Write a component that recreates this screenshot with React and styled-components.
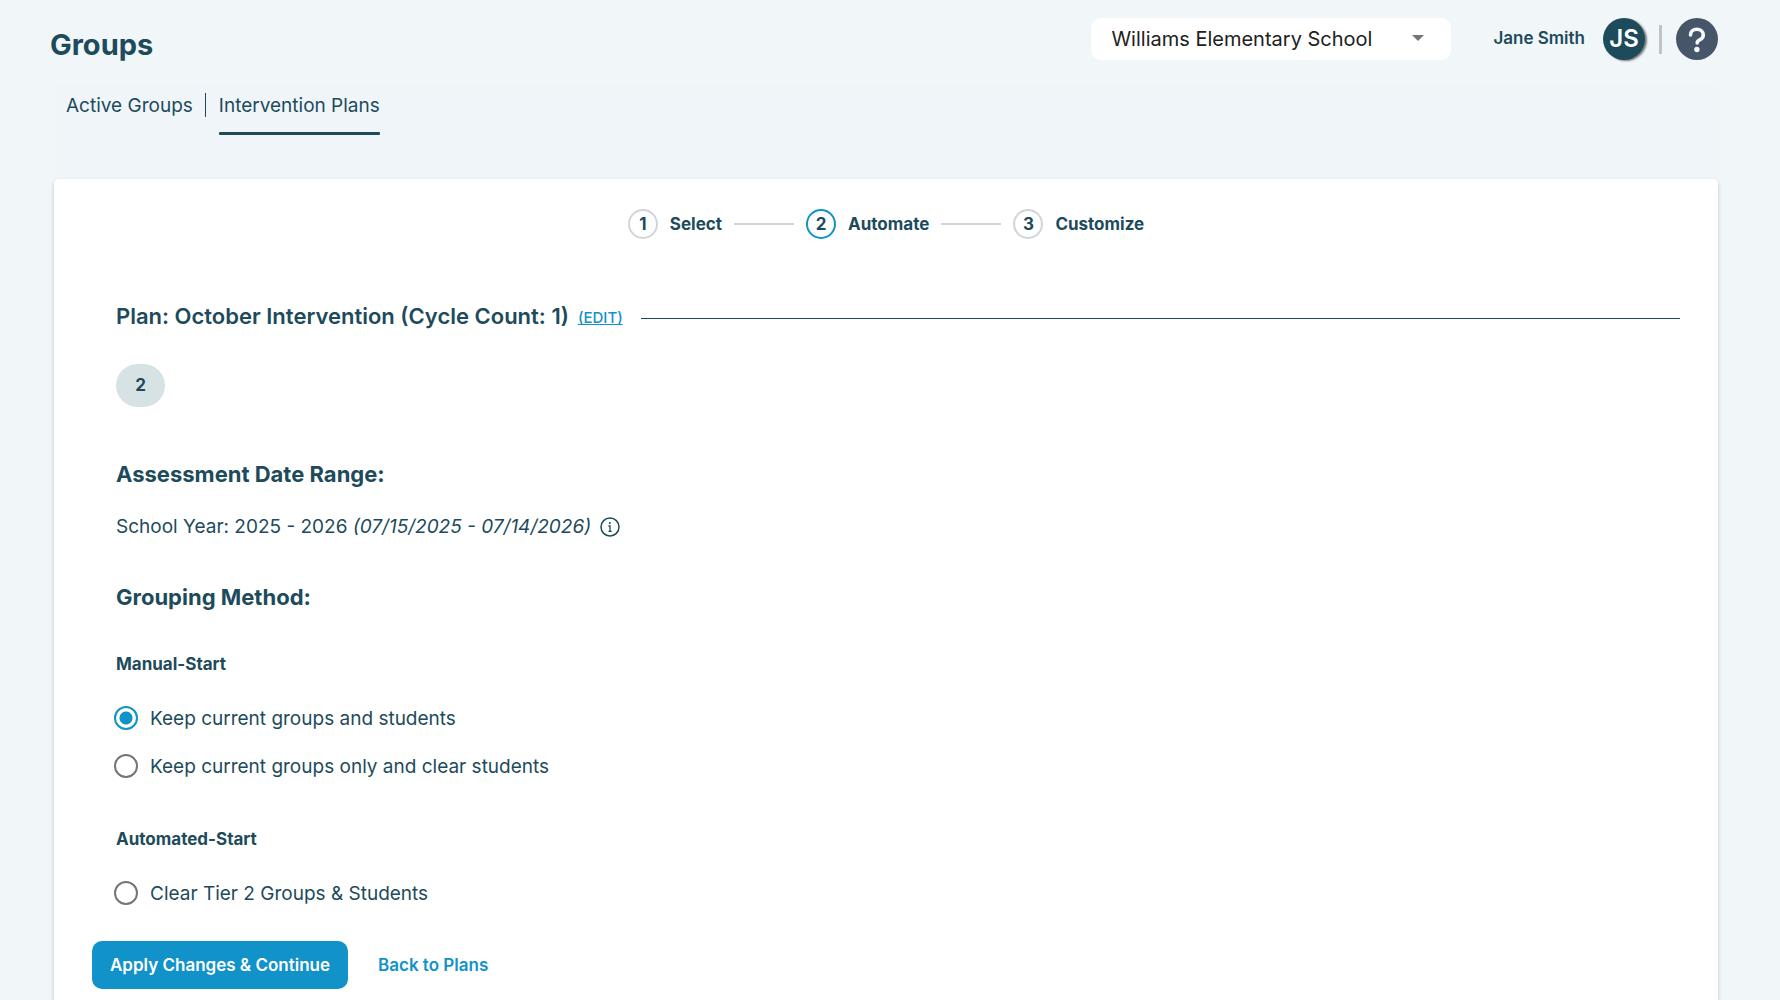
import React, { useState } from "react";
import styled, { createGlobalStyle } from "styled-components";

const ink = "#1d4b5b";
const blue = "#1192c8";

const GlobalStyle = createGlobalStyle`
  *, *::before, *::after { box-sizing: border-box; }
  body {
    margin: 0;
    background: #f1f6f9;
    color: ${ink};
    font-family: Inter, "Liberation Sans", sans-serif;
    font-size: 19px;
    line-height: 24px;
  }
  h1, h2, p, fieldset { margin: 0; padding: 0; border: 0; }
`;

const Page = styled.div`
  padding: 0 62px 0 54px;
  min-height: 100vh;
  display: flex;
  flex-direction: column;
`;

const Header = styled.header`
  height: 85px;
  margin-left: -4px;
  padding-top: 18px;
  display: flex;
  align-items: flex-start;
`;

const Title = styled.h1`
  flex: 1;
  padding-top: 10px;
  font-size: 29px;
  line-height: 34px;
  font-weight: 700;
`;

const SchoolPicker = styled.div`
  position: relative;
  width: 360px;
  margin-right: 42px;
`;

const SchoolSelect = styled.select`
  appearance: none;
  display: block;
  width: 100%;
  height: 42px;
  padding: 0 48px 0 20px;
  border: 0;
  border-radius: 10px;
  background: #fff;
  color: #212121;
  font: inherit;
  font-size: 20px;
`;

const Caret = styled.svg`
  position: absolute;
  right: 27px;
  top: 17px;
  width: 12px;
  height: 6px;
  pointer-events: none;
`;

const UserBar = styled.div`
  height: 42px;
  display: flex;
  align-items: center;
`;

const UserName = styled.span`
  margin-right: 18px;
  padding-bottom: 3px;
  font-size: 17px;
  font-weight: 600;
`;

const Avatar = styled.button`
  width: 42px;
  height: 42px;
  padding: 0;
  border: 0;
  border-radius: 50%;
  background: ${ink};
  color: #fff;
  box-shadow: 2px 1px 2px rgba(0, 0, 0, 0.5);
  font: 600 24px/42px Inter, "Liberation Sans", sans-serif;
`;

const UserDivider = styled.span`
  width: 3px;
  height: 29px;
  margin: 0 14px;
  background: #c1c4c7;
`;

const HelpButton = styled.button`
  width: 42px;
  height: 42px;
  padding: 0;
  border: 0;
  border-radius: 50%;
  background: #475569;
  svg { display: block; }
`;

const Tabs = styled.nav`
  height: 94px;
  padding: 8px 12px 0;
  background: #f0f5fa;
  display: flex;
  align-items: flex-start;
`;

const Tab = styled.a`
  color: ${ink};
  line-height: 26px;
  text-decoration: none;
  &::after {
    content: "";
    display: block;
    height: 3px;
    margin-top: 13px;
    border-radius: 1px;
    background: ${(p) => (p.$active ? ink : "transparent")};
  }
`;

const TabDivider = styled.span`
  width: 1px;
  height: 24px;
  margin: 0 13px 0 12px;
  background: ${ink};
`;

const Card = styled.main`
  flex: 1;
  padding: 30px 38px 11px;
  border-radius: 5px 5px 0 0;
  background: #fff;
  box-shadow: 0 2px 4px rgba(0, 0, 0, 0.2);
`;

const Stepper = styled.ol`
  margin: 0;
  padding: 0;
  list-style: none;
  display: flex;
  justify-content: center;
  gap: 12px;
  font-size: 17px;
  font-weight: 700;
`;

const Step = styled.li`
  display: flex;
  align-items: center;
  gap: 12px;
  &:not(:last-child)::after {
    content: "";
    width: 60px;
    height: 2px;
    background: #d1d5db;
  }
`;

const StepNumber = styled.span`
  width: 30px;
  height: 30px;
  border: 2px solid ${(p) => (p.$active ? blue : "#d1d5db")};
  border-radius: 50%;
  text-align: center;
  line-height: 26px;
`;

const Content = styled.div`
  padding: 60px 0 0 24px;
`;

const PlanRow = styled.div`
  display: flex;
  align-items: center;
  height: 34px;
`;

const PlanTitle = styled.h2`
  font-size: 22px;
  line-height: 28px;
  font-weight: 600;
`;

const PlanRule = styled.div`
  flex: 1;
  display: flex;
  align-items: center;
  gap: 18px;
  padding-top: 4px;
  margin-left: 9px;
  &::after {
    content: "";
    flex: 1;
    height: 1px;
    background: ${ink};
  }
`;

const EditLink = styled.a`
  color: ${blue};
  font-size: 15px;
  line-height: 20px;
  font-weight: 500;
`;

const TierBadge = styled.span`
  display: block;
  width: 49px;
  height: 43px;
  margin-top: 31px;
  border-radius: 22px;
  background: #d7e2e4;
  text-align: center;
  font-size: 17px;
  line-height: 43px;
  font-weight: 700;
`;

const Heading = styled.h2`
  margin-top: ${(p) => p.$top}px;
  font-size: 22px;
  line-height: 28px;
  font-weight: 700;
`;

const DateRange = styled.p`
  margin-top: 26px;
  display: flex;
  align-items: center;
  line-height: 26px;
  white-space: pre;
`;

const InfoIcon = styled.svg`
  width: 20px;
  height: 20px;
  margin-left: 9px;
`;

const Method = styled.fieldset`
  margin-top: ${(p) => p.$top}px;
  min-width: 0;
`;

const MethodName = styled.legend`
  padding: 0;
  margin-bottom: 30px;
  font-size: 17px;
  font-weight: 700;
`;

const Option = styled.label`
  display: flex;
  align-items: center;
  gap: 12px;
  margin-left: -2px;
  & + & { margin-top: 24px; }
`;

const OptionText = styled.span`
  padding-top: 2px;
  line-height: 22px;
`;

const Radio = styled.input`
  appearance: none;
  width: 24px;
  height: 24px;
  margin: 0;
  border: 2px solid #757575;
  border-radius: 50%;
  &:checked {
    border-color: ${blue};
    background: radial-gradient(circle, ${blue} 6px, transparent 7px);
  }
`;

const Actions = styled.div`
  margin-top: 36px;
  display: flex;
  align-items: center;
  gap: 30px;
`;

const ApplyButton = styled.button`
  height: 48px;
  padding: 0 18px;
  border: 0;
  border-radius: 10px;
  background: ${blue};
  color: #fff;
  font: 600 17px/24px Inter, "Liberation Sans", sans-serif;
`;

const BackLink = styled.a`
  color: ${blue};
  font-size: 17px;
  font-weight: 600;
  text-decoration: none;
`;

const steps = ["Select", "Automate", "Customize"];

const methods = [
  {
    name: "Manual-Start",
    options: ["Keep current groups and students", "Keep current groups only and clear students"],
  },
  { name: "Automated-Start", options: ["Clear Tier 2 Groups & Students"] },
];

export default function App() {
  const [chosen, setChosen] = useState(methods[0].options[0]);

  return (
    <>
      <GlobalStyle />
      <Page>
        <Header>
          <Title>Groups</Title>
          <SchoolPicker>
            <SchoolSelect aria-label="School">
              <option>Williams Elementary School</option>
            </SchoolSelect>
            <Caret viewBox="0 0 12 6" aria-hidden="true">
              <path d="M0 0h12L6 6z" fill="#757575" />
            </Caret>
          </SchoolPicker>
          <UserBar>
            <UserName>Jane Smith</UserName>
            <Avatar>JS</Avatar>
            <UserDivider />
            <HelpButton aria-label="Help">
              <svg width="42" height="42" viewBox="0 0 42 42" fill="none">
                <path
                  d="M14.5 17c0-3.400 2.700-5.700 6.300-5.700s6.500 2.200 6.500 5.600c0 2.900-1.800 4.100-3.700 5-1.800.9-2.400 1.300-2.400 3"
                  stroke="#f5f8fb"
                  strokeWidth="3.600"
                  strokeLinecap="round"
                />
                <circle cx="20.900" cy="31.500" r="2.700" fill="#f5f8fb" />
              </svg>
            </HelpButton>
          </UserBar>
        </Header>
        <Tabs>
          <Tab href="#active">Active Groups</Tab>
          <TabDivider />
          <Tab href="#plans" $active>Intervention Plans</Tab>
        </Tabs>
        <Card>
          <Stepper>
            {steps.map((step, i) => (
              <Step key={step}>
                <StepNumber $active={i === 1}>{i + 1}</StepNumber>
                {step}
              </Step>
            ))}
          </Stepper>
          <Content>
            <PlanRow>
              <PlanTitle>Plan: October Intervention (Cycle Count: 1)</PlanTitle>
              <PlanRule>
                <EditLink href="#edit">(EDIT)</EditLink>
              </PlanRule>
            </PlanRow>
            <TierBadge>2</TierBadge>
            <Heading $top={53}>Assessment Date Range:</Heading>
            <DateRange>
              School Year: 2025 - 2026 <em>(07/15/2025 - 07/14/2026)</em>
              <InfoIcon viewBox="0 0 20 20" fill="none" stroke={ink} aria-hidden="true">
                <circle cx="10" cy="10" r="9" strokeWidth="1.500" />
                <path d="M8.500 9H10v5M8.500 14.300h3.200" strokeWidth="1.300" />
                <circle cx="9.800" cy="6" r="1" fill={ink} stroke="none" />
              </InfoIcon>
            </DateRange>
            <Heading $top={43}>Grouping Method:</Heading>
            {methods.map((method, i) => (
              <Method key={method.name} $top={i === 0 ? 41 : 49}>
                <MethodName>{method.name}</MethodName>
                {method.options.map((option) => (
                  <Option key={option}>
                    <Radio
                      type="radio"
                      name="method"
                      checked={chosen === option}
                      onChange={() => setChosen(option)}
                    />
                    <OptionText>{option}</OptionText>
                  </Option>
                ))}
              </Method>
            ))}
          </Content>
          <Actions>
            <ApplyButton>Apply Changes &amp; Continue</ApplyButton>
            <BackLink href="#back">Back to Plans</BackLink>
          </Actions>
        </Card>
      </Page>
    </>
  );
}
